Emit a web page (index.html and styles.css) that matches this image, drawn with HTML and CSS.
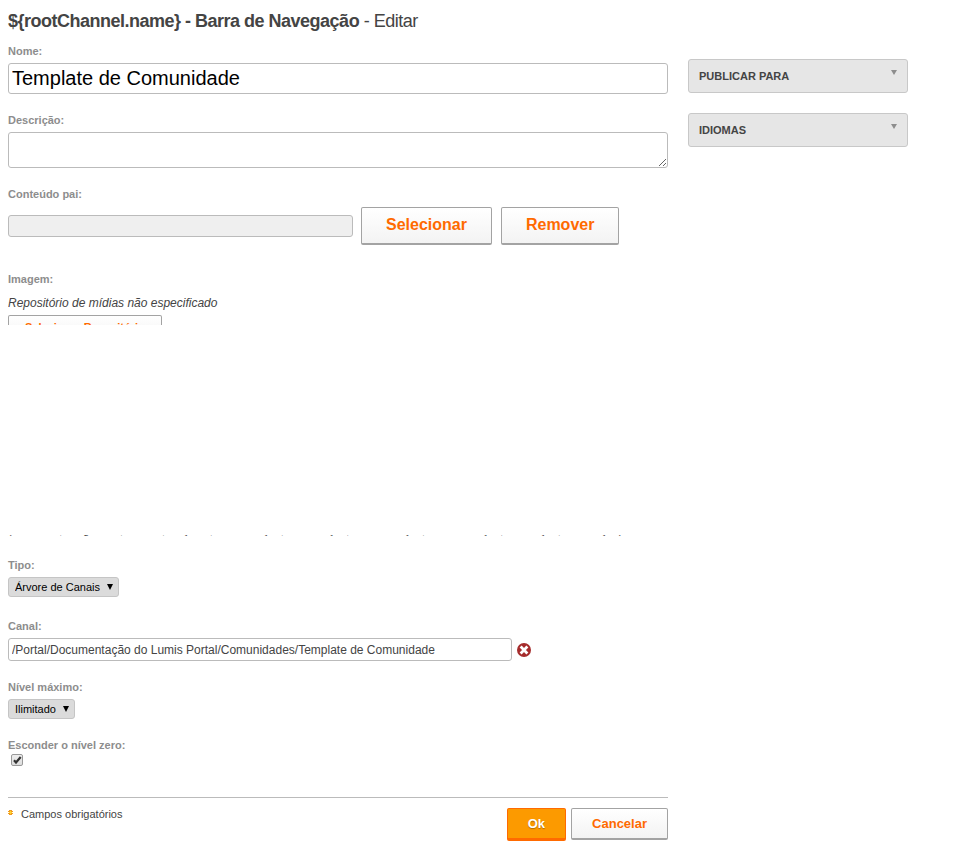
FILE: index.html
```html
<!DOCTYPE html>
<html lang="pt-BR">
<head>
<meta charset="utf-8">
<meta name="viewport" content="width=device-width, initial-scale=1">
<title>Barra de Navegação - Editar</title>
<link rel="stylesheet" href="styles.css">
</head>
<body>
<h1 class="title"><strong>${rootChannel.name} - Barra de Navegação</strong> - Editar</h1>
<div class="layout">
  <form class="form">
    <div class="field name-field">
      <label class="label" for="name">Nome:</label>
      <input class="text text-large" id="name" type="text" value="Template de Comunidade">
    </div>
    <div class="field description-field">
      <label class="label" for="description">Descrição:</label>
      <textarea class="text area" id="description"></textarea>
    </div>
    <div class="field parent-field">
      <label class="label" for="parent">Conteúdo pai:</label>
      <div class="parent-row">
        <input class="text parent-input" id="parent" type="text" readonly>
        <button class="button button-large" type="button">Selecionar</button>
        <button class="button button-large" type="button">Remover</button>
      </div>
    </div>
    <section class="image-field">
      <h2 class="label">Imagem:</h2>
      <div class="media">
        <p class="media-note">Repositório de mídias não especificado</p>
        <button class="button button-small" type="button">Selecionar Repositório</button>
      </div>
      <div class="hint"><p class="hint-text">(Conteúdo, imagem de, modelo, edição a, comunicação, alimentação, demonstração, documentação, orientação, numeração)</p></div>
    </section>
    <div class="field type-field">
      <label class="label" for="type">Tipo:</label>
      <span class="select-wrap"><select class="select" id="type"><option>Árvore de Canais</option></select><svg class="caret" viewBox="0 0 6 6" aria-hidden="true"><path d="M0 0h6L3 6z"/></svg></span>
    </div>
    <div class="field channel-field">
      <label class="label" for="channel">Canal:</label>
      <div class="channel-row">
        <input class="text channel-input" id="channel" type="text" value="/Portal/Documentação do Lumis Portal/Comunidades/Template de Comunidade">
        <button class="clear" type="button" aria-label="Remover canal"><svg viewBox="0 0 14 14"><circle cx="7" cy="7" r="7" fill="#a52c2c"/><path d="M3.6 3.6l6.8 6.8M10.4 3.6L3.6 10.4" stroke="#fff" stroke-width="2.8"/></svg></button>
      </div>
    </div>
    <div class="field level-field">
      <label class="label" for="level">Nível máximo:</label>
      <span class="select-wrap"><select class="select" id="level"><option>Ilimitado</option></select><svg class="caret" viewBox="0 0 6 6" aria-hidden="true"><path d="M0 0h6L3 6z"/></svg></span>
    </div>
    <div class="field hide-field">
      <label class="label" for="hide">Esconder o nível zero:</label>
      <input class="check" id="hide" type="checkbox" checked>
    </div>
    <footer class="footer">
      <p class="required"><svg class="star" viewBox="0 0 5 5" aria-hidden="true"><path d="M1 0h3v1h1v1H4v1h1v1H4v1H1V4H0V3h1V2H0V1h1z" fill="#f09a20"/><path d="M2 1h1v1h1v1H3v1H2V3H1V2h1z" fill="#ffd52e"/></svg>Campos obrigatórios</p>
      <div class="actions">
        <button class="button button-primary" type="submit">Ok</button>
        <button class="button button-cancel" type="button">Cancelar</button>
      </div>
    </footer>
  </form>
  <aside class="side">
    <button class="panel" type="button">PUBLICAR PARA<svg class="panel-caret" viewBox="0 0 6 5" aria-hidden="true"><path d="M0 0h6L3 5z"/></svg></button>
    <button class="panel" type="button">IDIOMAS<svg class="panel-caret" viewBox="0 0 6 5" aria-hidden="true"><path d="M0 0h6L3 5z"/></svg></button>
  </aside>
</div>
</body>
</html>
```
FILE: styles.css
```css
* { box-sizing: border-box; }
body {
  margin: 8px;
  background: #fff;
  color: #444;
  font: 11px/14px "Liberation Sans", Arial, sans-serif;
}
h1, h2, p { margin: 0; }
button, input, textarea, select { font-family: inherit; margin: 0; }
.title {
  font-size: 18px;
  line-height: 26px;
  font-weight: 400;
  letter-spacing: -0.5px;
}
.layout { display: flex; align-items: flex-start; gap: 20px; }
.form { flex: 0 1 660px; min-width: 0; padding-top: 10px; }
.side {
  flex: 0 0 220px;
  display: flex;
  flex-direction: column;
  gap: 20px;
  padding-top: 25px;
}
.label {
  display: block;
  color: #8d8d8d;
  font-size: 11px;
  line-height: 14px;
  font-weight: 700;
}
.field { display: flex; flex-direction: column; align-items: flex-start; gap: 5px; }
.text {
  border: 1px solid #bbb;
  border-radius: 3px;
  background: #fff;
  color: #444;
  font-size: 12px;
  padding: 2px 3px;
}
.text-large { width: 100%; height: 31px; font-size: 20px; color: #000; }
.area { display: block; width: 100%; height: 36px; resize: vertical; }
.description-field, .parent-field { margin-top: 19px; }
.parent-field { gap: 6px; }
.parent-row { display: flex; align-items: center; gap: 9px; }
.parent-input { width: 345px; height: 22px; background: #efefef; margin-right: -1px; }
.button {
  border: 1px solid #a3a3a3;
  border-bottom-width: 2px;
  border-radius: 2px;
  background: linear-gradient(#fff, #f3f3f3);
  color: #ff6a00;
  font-weight: 700;
  white-space: nowrap;
}
.button-large { height: 38px; padding: 0 24px 2px; font-size: 16px; }
.image-field { margin-top: 27px; }
.media { height: 39px; overflow: hidden; }
.media-note { padding-top: 9px; font-size: 12px; line-height: 16px; font-style: italic; }
.button-small { display: block; height: 24px; margin-top: 4px; padding: 0 16px; font-size: 11px; }
.hint {
  display: flex;
  align-items: flex-end;
  height: 1px;
  margin-top: 210px;
  overflow: hidden;
  white-space: nowrap;
}
.hint-text { line-height: 12px; }
.type-field { margin-top: 22px; }
.select-wrap { position: relative; display: flex; }
.select {
  appearance: none;
  height: 20px;
  padding: 0 18px 0 6px;
  border: 1px solid #c5c5c5;
  border-radius: 3px;
  background: #dbdbdb;
  color: #000;
  font-size: 11px;
}
.caret { position: absolute; right: 6px; top: 7px; width: 6px; height: 6px; pointer-events: none; }
.channel-field { margin-top: 22px; }
.channel-row { display: flex; align-items: center; gap: 5px; width: 100%; }
.channel-input { width: 504px; height: 23px; }
.clear { width: 14px; height: 14px; padding: 0; border: 0; background: none; }
.clear svg { display: block; }
.level-field { margin-top: 19px; }
.hide-field { margin-top: 19px; gap: 2px; }
.check {
  appearance: none;
  width: 12px;
  height: 12px;
  margin-left: 3px;
  border: 1px solid #999;
  border-radius: 2px;
  background: linear-gradient(#eee, #ddd);
}
.check:checked {
  background: url("data:image/svg+xml,%3Csvg xmlns='http://www.w3.org/2000/svg' viewBox='0 0 10 10'%3E%3Cpath d='M2 5.2l2 2.3L8.7 2' fill='none' stroke='%23333' stroke-width='2.2'/%3E%3C/svg%3E") center / 10px 10px no-repeat, linear-gradient(#eee, #ddd);
}
.footer {
  display: flex;
  justify-content: space-between;
  align-items: flex-start;
  margin-top: 31px;
  padding-top: 10px;
  border-top: 1px solid #bbb;
}
.required { display: flex; gap: 8px; line-height: 12px; }
.star { width: 5px; height: 5px; margin-top: 2px; }
.actions { display: flex; gap: 5px; align-items: flex-start; }
.button-primary {
  height: 33px;
  padding: 0 20px;
  border-color: #ff6a00;
  border-bottom-width: 3px;
  background: #fc9a00;
  color: #fff;
  font-size: 13px;
  text-shadow: 0 1px 1px rgba(0, 0, 0, 0.3);
}
.button-cancel { height: 32px; padding: 0 20px; font-size: 13px; }
.panel {
  display: flex;
  justify-content: space-between;
  align-items: center;
  height: 34px;
  padding: 0 10px;
  border: 1px solid #c8c8c8;
  border-radius: 3px;
  background: #e6e6e6;
  color: #444;
  font-size: 11px;
  font-weight: 700;
}
.panel-caret { width: 6px; height: 5px; margin-bottom: 8px; fill: #8d8d8d; }
```
